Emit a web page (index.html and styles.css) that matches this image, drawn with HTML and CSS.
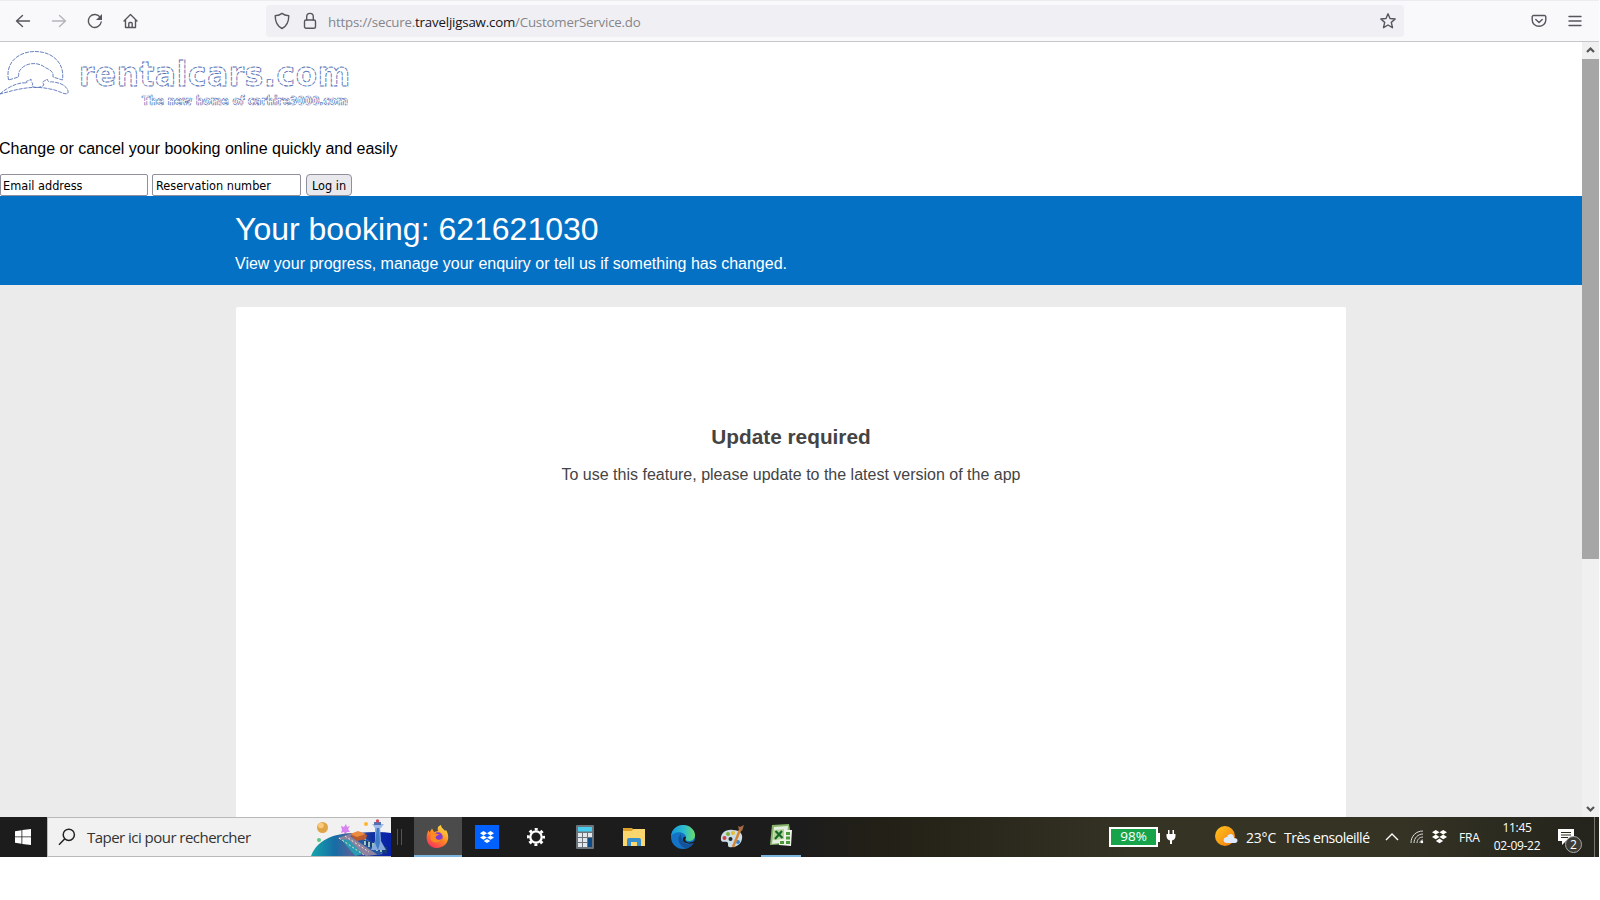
FILE: index.html
```html
<!DOCTYPE html>
<html lang="en">
<head>
    <meta charset="UTF-8">
    <meta name="viewport" content="width=device-width, initial-scale=1.0">
    <title>Your booking</title>
    <link rel="stylesheet" href="styles.css">
</head>
<body>
    <div class="screen">
        <!-- Browser toolbar -->
        <div class="toolbar">
            <div class="nav">
                <svg width="16" height="16" viewBox="0 0 16 16"><path d="M14.500 8H1.500M7.500 2.500L1.500 8l6 5.500"/></svg>
                <svg class="disabled" width="16" height="16" viewBox="0 0 16 16"><path d="M1.500 8h13M8.500 2.500l6 5.500-6 5.500"/></svg>
                <svg width="16" height="16" viewBox="0 0 16 16"><path d="M13.300 4.500A6.500 6.500 0 1 0 14.200 9"/><path class="solid" d="M15 1v6H9z"/></svg>
                <svg width="16" height="16" viewBox="0 0 16 16"><path d="M1 8l6.500-6.500L14 8M2.500 7v7.500h10V7M5.800 14.500V10.500q0-1 1-1h1.400q1 0 1 1v4"/></svg>
            </div>
            <div class="urlbar">
                <svg width="16" height="18" viewBox="0 0 16 18"><path d="M8 1.400C6 3 3.600 3.500 1.200 3.700 1.200 10 3 14 8 16.500c5-2.500 6.800-6.500 6.800-12.800C12.400 3.500 10 3 8 1.400z"/></svg>
                <svg width="14" height="18" viewBox="0 0 14 18"><rect x="1.500" y="8" width="11" height="8.300" rx="1.500"/><path d="M3.700 8V4.700a3.300 3.300 0 0 1 6.600 0V8"/></svg>
                <span class="url">https://secure.<b>traveljigsaw.com</b>/CustomerService.do</span>
                <svg class="star" width="18" height="18" viewBox="0 0 18 18"><path d="M9 1.800l2 4.700 5.200.5-3.900 3.400 1.200 5.300L9 13l-4.500 2.700 1.200-5.300L1.800 7 7 6.500z"/></svg>
            </div>
            <div class="tools">
                <svg width="16" height="16" viewBox="0 0 16 16"><path d="M2.500 2.500h11a1.300 1.300 0 0 1 1.300 1.300V7a6.800 6.300 0 0 1-13.600 0V3.800a1.300 1.300 0 0 1 1.300-1.300zM4.800 6.500L8 9.500l3.200-3"/></svg>
                <svg width="14" height="16" viewBox="0 0 14 16"><path d="M1 3.500h12M1 8h12M1 12.500h12"/></svg>
            </div>
        </div>

        <div class="viewport">
            <div class="page">
                <div class="site-header">
                    <svg class="logo" width="360" height="70" viewBox="0 0 360 70">
                        <path d="M8.500 38C5 21 18 9.500 35 9.500s30 11 27.500 28.500L53 35V32C52 28 47 27 43 24 36 20 26 21 21 27 18 30 19 32 18.500 35z"/>
                        <path d="M0 52C10 43 21 40 27 41c-2-3 1-1 4-4 0 6 3 2 1 7 3 3 10 1 12-1-3-5 1-3 3-6 2 5 4 2 6 3 11 1 16 7 15 11-3 3-9-3-18-4C33 43 18 47 0 52z"/>
                        <text class="logo-name" x="79" y="43.500" textLength="271">rentalcars.com</text>
                        <text class="logo-tag" x="142" y="62.500" textLength="206">The new home of carhire3000.com</text>
                    </svg>
                    <p class="lead">Change or cancel your booking online quickly and easily</p>
                    <form class="login">
                        <input type="text" class="field" value="Email address">
                        <input type="text" class="field" value="Reservation number">
                        <button type="button" class="login-button">Log in</button>
                    </form>
                </div>

                <div class="banner">
                    <h1>Your booking: 621621030</h1>
                    <p>View your progress, manage your enquiry or tell us if something has changed.</p>
                </div>

                <div class="content">
                    <div class="card">
                        <h2>Update required</h2>
                        <p>To use this feature, please update to the latest version of the app</p>
                    </div>
                </div>
            </div>

            <div class="scrollbar">
                <svg width="17" height="17" viewBox="0 0 17 17"><path d="M5 10l3.500-3.500L12 10"/></svg>
                <div class="thumb"></div>
                <svg class="down" width="17" height="17" viewBox="0 0 17 17"><path d="M5 7l3.500 3.500L12 7"/></svg>
            </div>
        </div>

        <!-- Windows taskbar -->
        <div class="taskbar">
            <div class="start">
                <svg width="16" height="16" viewBox="0 0 16 16"><path fill="#fff" d="M0 2.200L6.500 1.200V7.500H0zM7.300 1l8.700-1v7.500H7.300zM0 8.300h6.500v6.500l-6.500-1zM7.300 8.300H16V16l-8.700-1z"/></svg>
            </div>
            <div class="search">
                <svg class="lens" width="18" height="18" viewBox="0 0 18 18"><circle cx="10.800" cy="6.800" r="5.600"/><path d="M6.800 10.800L1 16.800"/></svg>
                <span>Taper ici pour rechercher</span>
                <svg class="scene" width="80" height="38" viewBox="0 0 80 38">
                    <defs>
                        <linearGradient id="sea" x1="0" x2="1">
                            <stop offset="0" stop-color="#14a6ac"/>
                            <stop offset=".3" stop-color="#176ca5"/>
                            <stop offset=".5" stop-color="#53639b"/>
                            <stop offset=".75" stop-color="#1233a0"/>
                            <stop offset="1" stop-color="#0720a8"/>
                        </linearGradient>
                    </defs>
                    <circle cx="11.500" cy="9.500" r="5.500" fill="#e0a549"/><circle cx="10" cy="7.500" r="2.800" fill="#fbcb7d"/>
                    <circle cx="8" cy="22" r="2" fill="#58c786"/><circle cx="55" cy="6" r="2" fill="#ffb52e"/>
                    <path fill="#d881f1" d="M30 8l3 1 2-3 1 3 3-1-2 3 2 3-3 0-2 3-1-3-3 1 1-3z"/>
                    <path fill="url(#sea)" d="M0 38C6 23 20 15 46 15q22-2 34 0v23z"/>
                    <path fill="#8d83a0" d="M27 20l12-4 33 20-17 2z"/><path fill="#2658a1" d="M39 18l9-2 27 17-8 4z"/>
                    <path fill="#2a9bb0" d="M30 21l8 1 14 14-8 2z"/>
                    <path d="M28 20l25 17M34 18l24 16M50 19l22 14" stroke="#f7e9cd" stroke-dasharray="2 2" fill="none"/>
                    <path fill="#bd5a2e" d="M40 18l7-4 9 3-1 4-9 2z"/><path fill="#ec8b40" d="M39 16l8-3 8 3-9 3z"/>
                    <path fill="#173c78" d="M53 22l23 7v7l-21-9z"/><path d="M54 23v4m4-3v5m4-4v6m4-5v7m4-6v7" stroke="#c8f1d7" stroke-width="1.500"/>
                    <path fill="#87a9db" d="M64 8h5l1 15 5 9H60l4-9z"/><path fill="#3f7cc8" d="M66 9h2l1 16-2 7-3-7z"/>
                    <path fill="#9ebbea" d="M61 6h12l-3 4h-6z"/><path fill="#526fae" d="M63 4h7v3h-7z"/><circle cx="66.500" cy="3" r="1.700" fill="#d7485d"/>
                </svg>
            </div>
            <div class="grip"></div>

            <div class="apps">
                <div class="app active">
                    <svg width="24" height="24" viewBox="0 0 24 24">
                        <defs><linearGradient id="fox" x1=".8" y1="0" x2=".2" y2="1"><stop offset="0" stop-color="#ffe34b"/><stop offset=".5" stop-color="#ff8a20"/><stop offset="1" stop-color="#f52c61"/></linearGradient></defs>
                        <path fill="url(#fox)" d="M2.500 5l1 2.500L6 3.500 8 7l4-1c-1-3 0-5 3-6 0 3 3 4 4 6l1-1c6 10-1 18-9 18C2 23-2 14 2.500 5z"/>
                        <circle cx="12" cy="12" r="4.700" fill="#813bd0"/><path fill="#ff8b21" d="M5 9c4-2 7 0 9 1-2 0-4 .5-4.500 2.500 1 3 5 3 7 .5-1 5-9 6-12 1.500z"/>
                    </svg>
                </div>
                <div class="app">
                    <svg width="24" height="24" viewBox="0 0 24 24"><path fill="#0061ff" d="M0 0h24v24H0z"/><path fill="#fff" d="M8.500 6L12 8.200 8.500 10.400 5 8.200zm7 0L19 8.200l-3.500 2.200L12 8.200zM8.500 10.400L12 12.600l-3.500 2.200L5 12.600zm7 0l3.500 2.200-3.500 2.200-3.500-2.200zM12 13.900l3.300 2.100L12 18.100 8.700 16z"/></svg>
                </div>
                <div class="app">
                    <svg width="20" height="20" viewBox="0 0 20 20"><circle cx="10" cy="10" r="5.700" fill="none" stroke="#fff" stroke-width="2.300"/><circle cx="10" cy="10" r="7.700" fill="none" stroke="#fff" stroke-width="2.600" stroke-dasharray="3 3.048" stroke-dashoffset="1.500"/></svg>
                </div>
                <div class="app">
                    <svg width="18" height="24" viewBox="0 0 18 24"><rect width="18" height="24" rx="1" fill="#6b747b"/><path fill="#48cdf0" d="M2 2h14v4.500H2z"/><path fill="#e3e7e9" d="M2 8h4v4H2zm5 0h4v4H7zm5 0h4v4h-4zM2 13h4v4H2zm5 0h4v4H7zM2 18h4v4H2zm5 0h4v4H7z"/><path fill="#0b4b88" d="M12 13h4v9h-4z"/></svg>
                </div>
                <div class="app">
                    <svg width="22" height="18" viewBox="0 0 22 18"><path fill="#dda12a" d="M0 0h9l1.500 1.500V4H0z"/><path fill="#fbd56d" d="M0 3h8.500l2-2H22v17H0z"/><path fill="#388fce" d="M4 18v-6q0-2 2-2h10q2 0 2 2v6h-4v-4H8v4z"/></svg>
                </div>
                <div class="app">
                    <svg width="24" height="24" viewBox="0 0 24 24">
                        <defs><linearGradient id="edge"><stop offset="0" stop-color="#1598db"/><stop offset=".55" stop-color="#2dbdcc"/><stop offset="1" stop-color="#6bdc66"/></linearGradient></defs>
                        <circle cx="12" cy="12" r="12" fill="#1473c5"/><path fill="url(#edge)" d="M0 11C1 4 6 0 12 0c7 0 12 5 12 10 0 4-3 6-6 6s-4-1-3-3c1-5-9-9-15-2z"/>
                        <path fill="#14539a" d="M10 9c-5 4-2 12 4 14 4 0 7-2 9-5-6 3-13 1-13-9z"/><path fill="#1c1c1c" d="M14.500 13.500c-1 2 1 4 4 4 2 0 4-1 5.500-2l-.7 2.200c-5 2.300-13 .3-11.300-4.700 1-2 4-1.500 2.500.500z"/>
                    </svg>
                </div>
                <div class="app">
                    <svg width="24" height="24" viewBox="0 0 24 24"><path fill="#cadce6" d="M1 15C0 8 6 4 13 5c7 0 10 4 9 9-1 6-7 9-13 8-2-1 0-4-2-5-3-1-5 1-6-2z"/><circle cx="4.500" cy="13" r="2" fill="#d33f43"/><circle cx="8" cy="9" r="2" fill="#83af35"/><circle cx="13" cy="8" r="2" fill="#e8bb30"/><circle cx="10.500" cy="14" r="2" fill="#252729"/><circle cx="18" cy="17" r="2" fill="#3682d2"/><path d="M13 22l7-17" stroke="#d88532" stroke-width="2.500"/><path fill="#a76c43" d="M18 1l2 1 4-2-2 6-3-1z"/></svg>
                </div>
                <div class="app running">
                    <svg width="24" height="24" viewBox="0 0 24 24"><path fill="#86b56b" d="M3 1l17-1 1 6-3 14-17 1z"/><path fill="#e4eddf" d="M5 3l14-1-2 16-14 2z"/><path fill="#edf4e7" d="M11 6h12l-1 16-12-1z"/><path fill="#4c993c" d="M17 8h4v3h-4zm0 4.500h4v3h-4zm-6 4.500h4v3h-4zm6 0h4v3h-4z"/><path fill="#b5d59a" d="M5 6l10-1v10l-11 1z"/><path d="M6.500 7l7 7M13 7l-7 8" stroke="#176829" stroke-width="2.200"/></svg>
                </div>
            </div>

            <div class="tray">
                <div class="battery">98%</div>
                <div class="battery-tip"></div>
                <svg class="plug" width="10" height="16" viewBox="0 0 10 16"><path fill="#fff" d="M2 1h1.500v4h3V1H8v4h1.500v2C9.500 9.500 8 11 6 11.500V15H4v-3.500C2 11 .5 9.500.5 7V5H2z"/></svg>
                <svg class="weather" width="23" height="22" viewBox="0 0 23 22">
                    <defs><linearGradient id="sun" x2="1" y2="1"><stop offset="0" stop-color="#ffc51b"/><stop offset="1" stop-color="#f37a12"/></linearGradient></defs>
                    <circle cx="10" cy="10" r="10" fill="url(#sun)"/><path fill="#dfeafc" d="M12 17c-5 0-4-6 0-6 2-5 7-3 7 1 5 0 4 5 1 5z"/>
                </svg>
                <span class="temp">23°C</span>
                <span class="sky">Très ensoleillé</span>
                <svg class="chevron" width="14" height="8" viewBox="0 0 14 8"><path d="M1 7l6-6 6 6"/></svg>
                <svg class="wifi" width="14" height="14" viewBox="0 0 14 14"><path d="M1 13C1 6 6 1 13 1"/><path d="M4 13c0-5 4-9 9-9M7 13c0-3.500 2.500-6 6-6M10 13c0-2 1-3 3-3"/><circle cx="12" cy="12" r="1.200"/></svg>
                <svg class="drop" width="15" height="14" viewBox="0 0 15 14"><path fill="#fff" d="M3.800 0l3.700 2.300-3.700 2.300L0 2.300zm7.400 0L15 2.300l-3.800 2.300-3.700-2.300zM3.800 4.600l3.700 2.300-3.700 2.300L0 6.900zm7.400 0L15 6.900l-3.800 2.300-3.700-2.300zM7.500 8.600l3.600 2.300L7.500 13.200l-3.600-2.300z"/></svg>
                <span class="lang">FRA</span>
                <div class="clock">
                    <span class="time">11:45</span>
                    <span class="date">02-09-22</span>
                </div>
                <div class="notifications">
                    <svg width="16" height="16" viewBox="0 0 16 16"><path fill="#fff" d="M0 0h16v12H8l-4 4v-4H0z"/><path d="M3 3.500h10M3 6h10M3 8.500h7" stroke="#2b2a1e"/></svg>
                    <span class="count">2</span>
                </div>
            </div>
        </div>
    </div>
</body>
</html>
```
FILE: styles.css
```css
* {
    box-sizing: border-box;
}

body {
    margin: 0;
    background: white;
    font-family: "Liberation Sans", Arial, sans-serif;
    font-size: 16px;
    overflow: hidden;
}

h1, h2, p {
    margin: 0;
}

svg {
    display: block;
    flex-shrink: 0;
}

.screen {
    width: 1599px;
    height: 857px;
    white-space: nowrap;
}

/* Browser toolbar */
.toolbar {
    display: flex;
    align-items: center;
    height: 42px;
    padding-left: 15px;
    background: #f9f9fb;
    border-top: 1px solid #ececf0;
    border-bottom: 1px solid #c7c7ca;
}

.toolbar svg {
    fill: none;
    stroke: #56565d;
    stroke-width: 1.4;
    stroke-linecap: round;
    stroke-linejoin: round;
}

.toolbar .solid {
    fill: #56565d;
    stroke: none;
}

.nav {
    display: flex;
    gap: 20px;
    width: 251px;
}

.toolbar .disabled {
    stroke: #b5b5ba;
}

.urlbar {
    display: flex;
    align-items: center;
    width: 1138px;
    height: 32px;
    padding: 0 7px 0 8px;
    background: #f0f0f4;
    border-radius: 4px;
}

.urlbar svg + svg {
    margin-left: 13px;
}

.url {
    margin-left: 11px;
    padding-top: 2px;
    color: #85858b;
    font-family: "Open Sans", "Noto Sans", sans-serif;
    font-size: 13.3px;
    letter-spacing: -0.2px;
}

.url b {
    color: #15141a;
    font-weight: normal;
}

.urlbar .star {
    margin-left: auto;
}

.tools {
    display: flex;
    gap: 21px;
    margin-left: 127px;
}

/* Web page */
.viewport {
    display: flex;
    height: 775px;
}

.page {
    display: flex;
    flex-direction: column;
    width: 1582px;
}

.site-header {
    height: 154px;
}

.logo {
    fill: none;
    stroke: #5873b7;
    stroke-width: 0.9;
    stroke-dasharray: 4 1;
    overflow: visible;
}

.logo text {
    font-family: "DejaVu Sans Condensed", "DejaVu Sans", sans-serif;
    font-stretch: condensed;
    font-weight: bold;
}

.logo-name {
    font-size: 34.5px;
}

.logo-tag {
    font-size: 12px;
    stroke-width: 0.7;
}

.lead {
    margin-top: 27px;
    margin-left: -1px;
    line-height: 20px;
}

.login {
    display: flex;
    margin-top: 15px;
}

.field {
    width: 149px;
    height: 22px;
    margin-right: 4px;
    padding: 1px 3px;
    border: 1px solid #8f8f9d;
    border-radius: 2px;
    font-family: "DejaVu Sans Condensed", "DejaVu Sans", sans-serif;
    font-size: 12.6px;
}

.field:first-child {
    width: 148px;
    padding-left: 2px;
}

.login-button {
    width: 46px;
    height: 22px;
    margin-left: 1px;
    padding: 0;
    background: #e9e9ed;
    border: 1px solid #8f8f9d;
    border-radius: 4px;
    font-family: "DejaVu Sans Condensed", "DejaVu Sans", sans-serif;
    font-size: 12.6px;
}

.banner {
    height: 89px;
    padding: 14px 235px 0;
    background: #0571c4;
    color: white;
}

.banner h1 {
    font-size: 32px;
    font-weight: normal;
    line-height: 38px;
}

.banner p {
    margin-top: 6px;
    line-height: 20px;
}

.content {
    flex: 1;
    padding: 22px 236px 0;
    background: #ebebeb;
}

.card {
    height: 100%;
    padding-top: 117px;
    background: white;
    border-radius: 2px 2px 0 0;
    color: #444;
    text-align: center;
}

.card h2 {
    font-size: 20.8px;
    line-height: 26px;
}

.card p {
    margin-top: 14px;
    line-height: 22px;
}

.scrollbar {
    display: flex;
    flex-direction: column;
    width: 17px;
    background: #f0f0f0;
}

.scrollbar svg {
    fill: none;
    stroke: #555;
    stroke-width: 2.2;
}

.scrollbar .down {
    margin-top: auto;
}

.thumb {
    height: 500px;
    background: #a6a6a6;
}

/* Taskbar */
.taskbar {
    display: flex;
    height: 40px;
    background: linear-gradient(90deg, #1c1c1c 0, #1c1c1c 800px, #222016 880px, #343324 1130px, #343324 1400px, #24231c 1599px);
    font-family: "Open Sans", "Noto Sans", sans-serif;
    color: white;
}

.start {
    display: flex;
    align-items: center;
    width: 47px;
    padding-left: 15px;
}

.search {
    display: flex;
    align-items: center;
    width: 344px;
    padding-left: 10px;
    background: #f1f1f1;
    border: 1px solid #b9b9b9;
    border-right: none;
    color: #333;
    font-size: 15px;
    letter-spacing: -0.53px;
}

.search span {
    margin-left: 11px;
}

.lens {
    fill: none;
    stroke: #222;
    stroke-width: 1.5;
}

.scene {
    margin-left: auto;
}

.grip {
    width: 5px;
    height: 16px;
    margin: 12px 12px 0 6px;
    border-left: 1px solid #555;
    border-right: 1px solid #555;
}

.apps {
    display: flex;
    gap: 1px;
}

.app {
    display: flex;
    align-items: center;
    justify-content: center;
    width: 48px;
}

.active {
    background: #4b4b4b;
    border-bottom: 2px solid #79b5de;
    padding-top: 2px;
}

.running {
    width: 40px;
    margin-left: 4px;
    padding-right: 1px;
    border-bottom: 2px solid #79b5de;
}

.tray {
    display: flex;
    align-items: center;
    width: 490px;
    margin-left: auto;
    font-size: 14px;
}

.battery {
    width: 49px;
    height: 20px;
    background: #16a34a;
    border: 2px solid white;
    font-size: 13.5px;
    line-height: 15px;
    text-align: center;
}

.battery-tip {
    width: 2px;
    height: 9px;
    background: white;
}

.plug {
    margin-left: 6px;
}

.weather {
    margin-left: 39px;
}

.temp {
    width: 38px;
    margin-left: 8px;
    letter-spacing: -0.2px;
}

.sky {
    width: 102px;
    letter-spacing: -0.5px;
}

.chevron {
    margin-left: -1px;
    fill: none;
    stroke: white;
    stroke-width: 1.4;
}

.wifi {
    margin-left: 11px;
    fill: white;
}

.wifi path {
    fill: none;
    stroke: #ddd;
}

.drop {
    margin-left: 8px;
}

.lang {
    width: 35px;
    margin-left: 12px;
    font-size: 12px;
    letter-spacing: -0.2px;
}

.clock {
    display: flex;
    flex-direction: column;
    align-items: center;
    width: 46px;
    font-size: 12px;
    letter-spacing: -0.3px;
    line-height: 18px;
}

.notifications {
    position: relative;
    width: 37px;
    height: 40px;
    margin-left: 18px;
    padding-top: 12px;
    border-right: 1px solid #77766f;
}

.count {
    position: absolute;
    left: 7px;
    top: 19px;
    width: 17px;
    height: 17px;
    background: #3c3b34;
    border: 1px solid #aaa;
    border-radius: 50%;
    font-size: 12px;
    line-height: 15px;
    text-align: center;
}
```
